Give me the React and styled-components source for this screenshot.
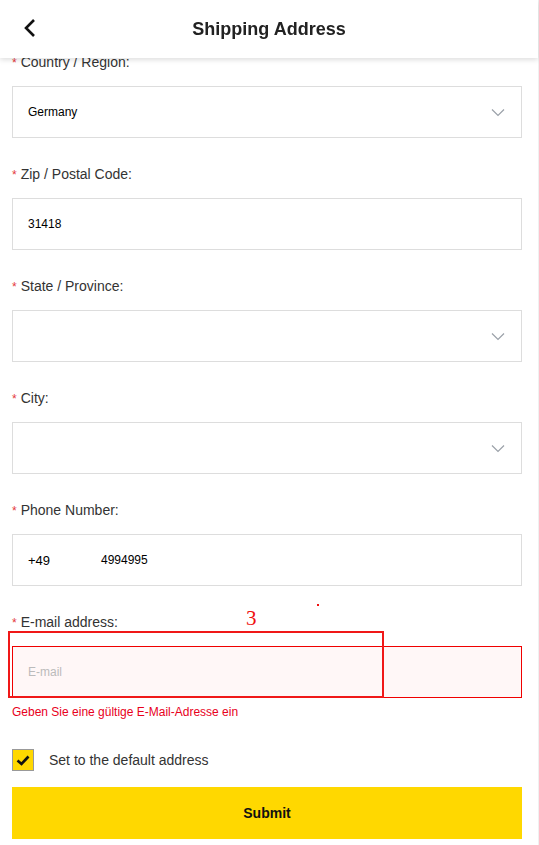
import React, { useState } from "react";
import styled, { createGlobalStyle } from "styled-components";

const GlobalStyle = createGlobalStyle`
  html, body {
    margin: 0;
    padding: 0;
    background: #fff;
  }
  body {
    font-family: "Liberation Sans", Arial, sans-serif;
    color: #333;
  }
  * {
    box-sizing: border-box;
  }
`;

const Page = styled.div`
  position: relative;
  width: 539px;
  min-height: 845px;
  border-right: 1px solid #f0f0f0;
  overflow: hidden;
`;

const Header = styled.header`
  position: fixed;
  top: 0;
  left: 0;
  width: 538px;
  height: 58px;
  background: #fff;
  box-shadow: 0 2px 5px rgba(0, 0, 0, 0.13);
  z-index: 10;
  display: flex;
  align-items: center;
  justify-content: center;

  h1 {
    margin: 0;
    font-size: 18px;
    font-weight: 700;
    color: #222;
  }
`;

const BackButton = styled.button`
  position: absolute;
  left: 18px;
  top: 16px;
  width: 24px;
  height: 24px;
  padding: 0;
  border: none;
  background: transparent;
  display: flex;
  align-items: center;
  justify-content: center;
`;

const Form = styled.main`
  padding: 52px 16px 0 12px;
  display: flex;
  flex-direction: column;
  gap: 26px;
`;

const Field = styled.div`
  display: flex;
  flex-direction: column;
  gap: 14px;
`;

const Label = styled.label`
  font-size: 14px;
  line-height: 20px;
  height: 20px;
  color: #333;

  .req {
    color: #e4393c;
    margin-right: 4px;
    font-size: 12px;
  }
`;

const Box = styled.div`
  height: 52px;
  display: flex;
  align-items: center;
  padding: 0 16px 0 15px;
  border: 1px solid ${(p) => (p.$error ? "#f00000" : "#ddd")};
  background: ${(p) => (p.$error ? "#fff7f7" : "#fff")};
  font-size: 12px;
  color: #000;
`;

const Value = styled.span`
  flex: 1;
  color: ${(p) => (p.$placeholder ? "#bbb" : "#000")};
`;

const Code = styled.span`
  width: 73px;
  font-size: 13px;
  color: #000;
`;

const Chevron = () => (
  <svg width="14" height="9" viewBox="0 0 14 9">
    <path d="M1 1.5 L7 7.5 L13 1.5" fill="none" stroke="#9aa0a8" strokeWidth="1.2" />
  </svg>
);

const ErrorText = styled.div`
  margin-top: -20px;
  font-size: 12px;
  line-height: 16px;
  color: #e8001c;
`;

const CheckRow = styled.div`
  margin-top: 3px;
  display: flex;
  align-items: center;
  gap: 15px;
  font-size: 14px;
  color: #333;
`;

const CheckBox = styled.span`
  width: 22px;
  height: 22px;
  border: 1px solid #999;
  background: #ffd800;
  display: flex;
  align-items: center;
  justify-content: center;
`;

const Submit = styled.button`
  margin-top: -10px;
  height: 52px;
  border: none;
  background: #ffd800;
  font-family: "Liberation Sans", Arial, sans-serif;
  font-size: 14px;
  font-weight: 700;
  color: #111;
`;

const Mark = styled.div`
  position: absolute;
  left: 8px;
  top: 631px;
  width: 376px;
  height: 67px;
  border: 2px solid #f01818;
  pointer-events: none;
`;

const MarkNumber = styled.span`
  position: absolute;
  left: 246px;
  top: 606px;
  font-family: "Liberation Serif", serif;
  font-size: 21px;
  color: #f01010;
`;

const MarkDot = styled.span`
  position: absolute;
  left: 317px;
  top: 604px;
  width: 2px;
  height: 2px;
  background: #f01010;
`;

const SelectField = ({ label, value }) => (
  <Field>
    <Label>
      <span className="req">*</span>
      {label}
    </Label>
    <Box>
      <Value>{value}</Value>
      <Chevron />
    </Box>
  </Field>
);

export default function App() {
  const [isDefault, setIsDefault] = useState(true);

  return (
    <Page>
      <GlobalStyle />
      <Header>
        <BackButton aria-label="back">
          <svg width="14" height="20" viewBox="0 0 14 20">
            <path d="M11 2 L3 10 L11 18" fill="none" stroke="#111" strokeWidth="2.6" />
          </svg>
        </BackButton>
        <h1>Shipping Address</h1>
      </Header>

      <Form>
        <SelectField label="Country / Region:" value="Germany" />
        <Field>
          <Label>
            <span className="req">*</span>Zip / Postal Code:
          </Label>
          <Box>
            <Value>31418</Value>
          </Box>
        </Field>
        <SelectField label="State / Province:" value="" />
        <SelectField label="City:" value="" />
        <Field>
          <Label>
            <span className="req">*</span>Phone Number:
          </Label>
          <Box>
            <Code>+49</Code>
            <Value>4994995</Value>
          </Box>
        </Field>
        <Field>
          <Label>
            <span className="req">*</span>E-mail address:
          </Label>
          <Box $error>
            <Value $placeholder>E-mail</Value>
          </Box>
        </Field>
        <ErrorText>Geben Sie eine gültige E-Mail-Adresse ein</ErrorText>
        <CheckRow onClick={() => setIsDefault(!isDefault)}>
          <CheckBox>
            {isDefault && (
              <svg width="14" height="11" viewBox="0 0 14 11">
                <path d="M1.5 5.5 L5.5 9 L12.5 1.5" fill="none" stroke="#111" strokeWidth="2.6" />
              </svg>
            )}
          </CheckBox>
          Set to the default address
        </CheckRow>
        <Submit>Submit</Submit>
      </Form>

      <MarkDot />
      <MarkNumber>3</MarkNumber>
      <Mark />
    </Page>
  );
}
